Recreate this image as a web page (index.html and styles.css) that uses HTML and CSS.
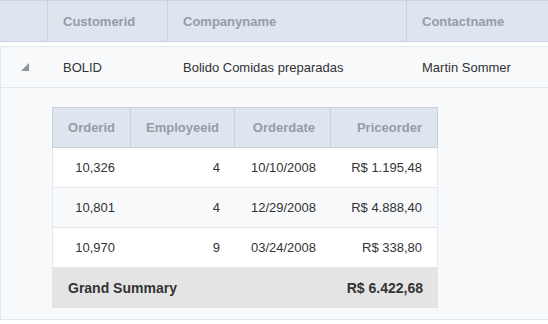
FILE: index.html
```html
<!DOCTYPE html>
<html lang="en">
<head>
  <meta charset="UTF-8" />
  <title>Customers</title>
  <link rel="stylesheet" href="styles.css">
</head>
<body>
  <div class="grid">
    <div class="grid-head">
      <div class="cell"></div>
      <div class="cell">Customerid</div>
      <div class="cell">Companyname</div>
      <div class="cell">Contactname</div>
    </div>
    <div class="gap"></div>
    <div class="master-row">
      <div class="cell expander">
        <svg width="8" height="8" viewBox="0 0 8 8"><polygon points="8,0 8,8 0,8" fill="#8a93a1" /></svg>
      </div>
      <div class="cell">BOLID</div>
      <div class="cell">Bolido Comidas preparadas</div>
      <div class="cell">Martin Sommer</div>
    </div>

    <!-- Orders for the expanded customer -->
    <div class="detail">
      <div class="orders">
        <div class="orders-head">
          <div class="cell">Orderid</div>
          <div class="cell">Employeeid</div>
          <div class="cell">Orderdate</div>
          <div class="cell">Priceorder</div>
        </div>
        <div class="orders-row">
          <div class="cell">10,326</div>
          <div class="cell">4</div>
          <div class="cell">10/10/2008</div>
          <div class="cell">R$ 1.195,48</div>
        </div>
        <div class="orders-row alt">
          <div class="cell">10,801</div>
          <div class="cell">4</div>
          <div class="cell">12/29/2008</div>
          <div class="cell">R$ 4.888,40</div>
        </div>
        <div class="orders-row last">
          <div class="cell">10,970</div>
          <div class="cell">9</div>
          <div class="cell">03/24/2008</div>
          <div class="cell">R$ 338,80</div>
        </div>
        <div class="summary">
          <div class="cell">Grand Summary</div>
          <div class="cell total">R$ 6.422,68</div>
        </div>
      </div>
    </div>
  </div>
</body>
</html>
```

FILE: styles.css
```css
body {
  margin: 0;
  background: #fff;
  font-family: 'Liberation Sans', Arial, sans-serif;
  font-size: 13px;
  color: #333;
  overflow: hidden;
}
.grid-head {
  display: grid;
  grid-template-columns: 48px 120px 239px 1fr;
  height: 40px;
  background: #dfe5ee;
  border-top: 1px solid #cdd4de;
  border-bottom: 1px solid #c9d1dc;
  color: #959ca8;
  font-weight: bold;
}
.grid-head .cell {
  border-right: 1px solid #c9d1dc;
  padding-left: 15px;
  display: flex;
  align-items: center;
}
.grid-head .cell:first-child {
  padding: 0;
}
.grid-head .cell:last-child {
  border-right: none;
}
.gap {
  height: 4px;
}
.master-row {
  display: grid;
  grid-template-columns: 47px 120px 239px 1fr;
  height: 40px;
  background: #f7f9fb;
  border-top: 1px solid #e3e7ed;
  border-bottom: 1px solid #e3e7ed;
  border-left: 1px solid #e3e7ed;
}
.master-row .cell {
  padding-left: 15px;
  display: flex;
  align-items: center;
}
.master-row .expander {
  padding-left: 20px;
}
.detail {
  background: #f7f9fb;
  border-left: 1px solid #e3e7ed;
  border-bottom: 1px solid #e3e7ed;
  padding: 19px 0 11px 51px;
}
.orders {
  width: 386px;
}
.orders-head,
.orders-row {
  display: grid;
  grid-template-columns: 78px 104px 96px 107px;
}
.orders-head {
  height: 39px;
  background: #dfe5ee;
  border: 1px solid #c9d1dc;
  border-right: none;
  color: #959ca8;
  font-weight: bold;
}
.orders-head .cell {
  border-right: 1px solid #c9d1dc;
}
.orders .cell {
  display: flex;
  align-items: center;
  justify-content: flex-end;
  padding-right: 15px;
}
.orders-row .cell:first-child {
  padding-right: 16px;
}
.orders-row {
  height: 39px;
  background: #fff;
  border-left: 1px solid #e3e8ee;
  border-bottom: 1px solid #e3e8ee;
}
.orders-row .cell:last-child {
  border-right: 1px solid #e3e8ee;
}
.orders-row.alt {
  background: #f7f9fb;
}
.orders-row.last {
  border-bottom: none;
}
.summary {
  display: flex;
  justify-content: space-between;
  height: 41px;
  background: #e4e4e4;
  font-size: 14px;
  font-weight: bold;
}
.summary .cell {
  padding-left: 16px;
}
```
